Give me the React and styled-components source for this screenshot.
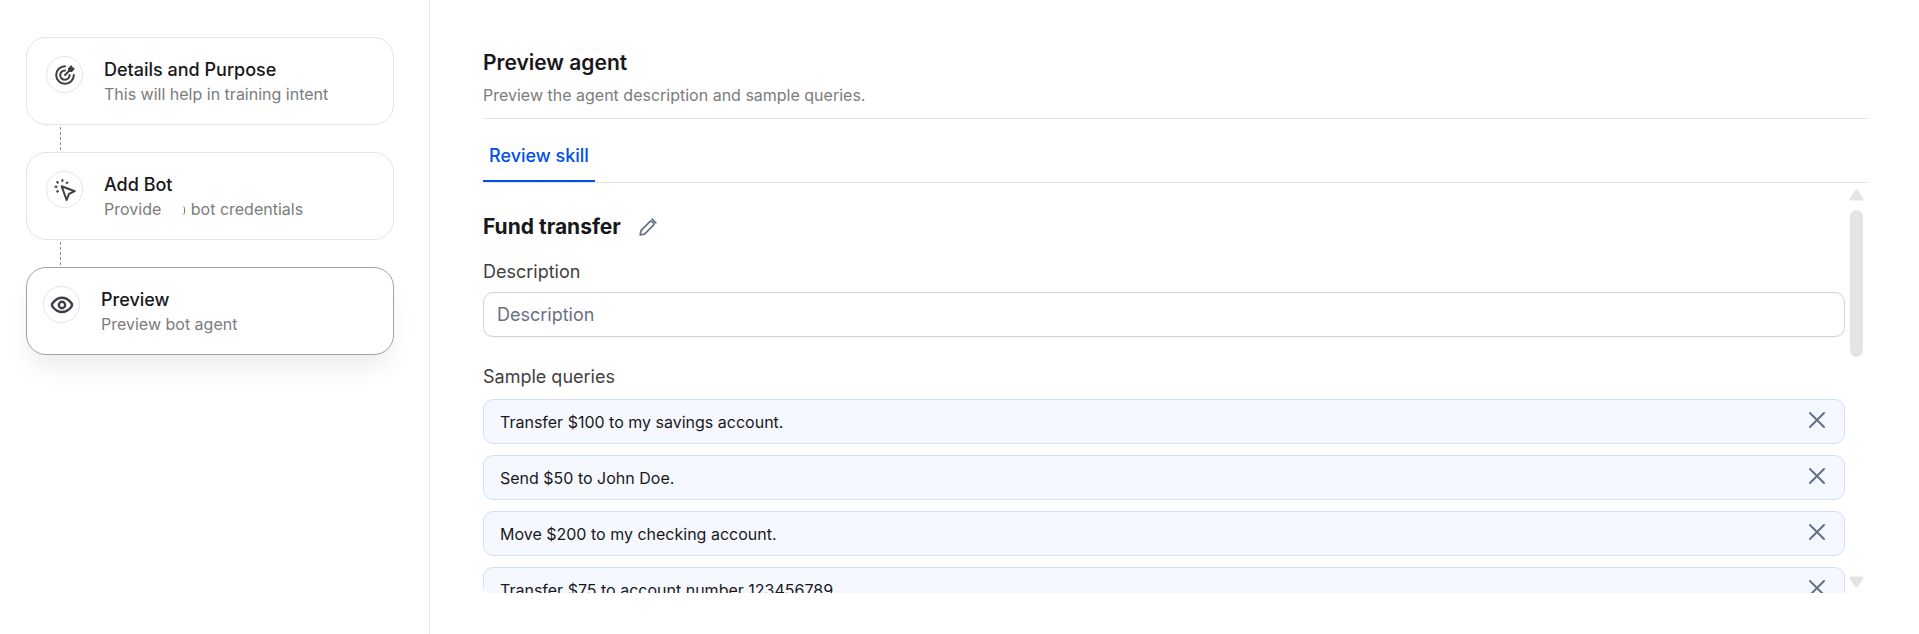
import React, { useState } from 'react';
import styled, { createGlobalStyle } from 'styled-components';

const GlobalStyle = createGlobalStyle`
    * {
        box-sizing: border-box;
    }

    body {
        margin: 0;
        background: #ffffff;
        font-family: Inter, "Liberation Sans", sans-serif;
        color: #18181b;
    }

    h1, h2, p, ul, ol {
        margin: 0;
        padding: 0;
    }
`

const Page = styled.div`
    display: flex;
    height: 100vh;
`

const Sidebar = styled.nav`
    flex: 0 0 430px;
    padding: 37px 35px 0 26px;
    border-right: 1px solid #e4e4e7;
`

const Steps = styled.ol`
    list-style: none;
`

const Connector = styled.li`
    height: 27px;
    padding: 2px 0 2px 34px;
`

const StepCard = styled.button`
    display: flex;
    align-items: flex-start;
    gap: 21px;
    width: 100%;
    height: 88px;
    padding: 18px ${props => props.$active ? '16px' : '19px'};
    background: #ffffff;
    border: 1px solid ${props => props.$active ? '#a1a1aa' : '#e4e4e7'};
    border-radius: 20px;
    box-shadow: ${props => props.$active ? '0 16px 24px -4px rgba(0, 0, 0, 0.08)' : 'none'};
    font-family: inherit;
    text-align: left;
    cursor: pointer;
`

const StepIcon = styled.span`
    display: flex;
    flex: none;
    align-items: center;
    justify-content: center;
    width: 37px;
    height: 37px;
    border: 1px solid #e4e4e7;
    border-radius: 50%;
    color: #3f3f46;
`

const StepText = styled.span`
    display: flex;
    flex-direction: column;
    padding-top: 1px;
`

const StepTitle = styled.span`
    font-size: 18px;
    line-height: 26px;
    font-weight: 500;
    color: #18181b;
`

const StepInfo = styled.span`
    font-size: 16px;
    line-height: 22px;
    color: #7c7c7c;
`

const CopyMark = styled.span`
    display: inline-block;
    width: 3px;
    height: 9px;
    margin: 0 1px 0 21px;
    border-right: 1px solid #7c7c7c;
    border-radius: 0 4px 4px 0;
`

const Main = styled.main`
    display: flex;
    flex: 1;
    flex-direction: column;
    min-width: 0;
    padding: 49px 51px 41px 53px;
`

const Header = styled.header`
    padding-bottom: 12px;
    border-bottom: 1px solid #e4e4e7;
`

const Title = styled.h1`
    font-size: 21px;
    line-height: 28px;
    font-weight: 600;
`

const Subtitle = styled.p`
    margin-top: 7px;
    font-size: 16px;
    line-height: 22px;
    color: #7c7c7c;
`

const Tabs = styled.div`
    display: flex;
    margin-top: 22px;
    border-bottom: 1px solid #e4e4e7;
`

const Tab = styled.button`
    height: 41px;
    padding: 0 6px 10px;
    background: none;
    border: 0;
    border-bottom: 2px solid #004eeb;
    font-family: inherit;
    font-size: 18px;
    line-height: 28px;
    font-weight: 500;
    color: #004eeb;
    cursor: pointer;
`

const ScrollArea = styled.div`
    display: flex;
    flex: 1;
    gap: 4px;
    min-height: 0;
`

const Content = styled.div`
    flex: 1;
    min-width: 0;
    padding-top: 30px;
    overflow-y: auto;
    scrollbar-width: none;
    border-radius: 0 0 0 6px;
`

const ScrollTrack = styled.div`
    display: flex;
    flex-direction: column;
    align-items: center;
    width: 15px;
    margin-right: 4px;
    padding: 6px 0 5px;
    color: #e4e4e4;
`

const ScrollThumb = styled.div`
    width: 13px;
    height: 147px;
    margin: 9px 0 auto;
    background: #e4e4e4;
    border-radius: 7px;
`

const SkillRow = styled.div`
    display: flex;
    align-items: center;
    gap: 17px;
`

const SkillName = styled.h2`
    font-size: 21px;
    line-height: 28px;
    font-weight: 700;
`

const IconButton = styled.button`
    display: flex;
    padding: 0;
    background: none;
    border: 0;
    color: #667085;
    cursor: pointer;
`

const RemoveButton = styled(IconButton)`
    padding-bottom: 3px;
`

const Label = styled.label`
    display: block;
    margin-top: 17px;
    font-size: 18px;
    line-height: 28px;
    color: #404040;
`

const DescriptionInput = styled.input`
    display: block;
    width: 100%;
    height: 45px;
    margin-top: 6px;
    padding: 0 13px;
    background: #ffffff;
    border: 1px solid #d0d5dd;
    border-radius: 10px;
    box-shadow: 0 1px 2px rgba(16, 24, 40, 0.05);
    font-family: inherit;
    font-size: 18px;
    color: #18181b;

    &::placeholder {
        color: #667085;
        opacity: 1;
    }
`

const ListTitle = styled.p`
    margin-top: 26px;
    font-size: 18px;
    line-height: 28px;
    color: #404040;
`

const QueryList = styled.ul`
    display: flex;
    flex-direction: column;
    gap: 11px;
    margin-top: 8px;
    list-style: none;
`

const QueryItem = styled.li`
    display: flex;
    flex: none;
    align-items: center;
    justify-content: space-between;
    height: 45px;
    padding: 0 18px 0 16px;
    background: #f5f8ff;
    border: 1px solid #d1e0ff;
    border-radius: 10px;
    font-size: 16px;
    line-height: 22px;
`

function TargetIcon() {
    return (
        <svg width="22" height="22" viewBox="0 0 22 22" fill="none" stroke="currentColor" strokeWidth="2" strokeLinecap="round" strokeLinejoin="round">
            <path d="M11 2.2A8.8 8.8 0 1 0 19.8 11" />
            <path d="M11 6.4A4.7 4.7 0 1 0 15.6 11" />
            <path d="M11 11l5-5" />
            <path d="M15 7V4.6L17.3 2.4l.5 1.8 1.8.5L17.4 7z" fill="currentColor" />
        </svg>
    )
}

function CursorIcon() {
    return (
        <svg width="24" height="24" viewBox="0 0 24 24" fill="none" stroke="currentColor" strokeWidth="2" strokeLinejoin="round">
            <path d="M8.6 8.2l13.2 5-5.8 2.6-2.4 6.2z" />
            <path d="M9.4 1.2v2.6M1.6 8.8h2.8M3.6 3.4l1.8 1.8M14.8 3.8L13.2 5.6M5.4 12.6l-1.8 1.6" />
        </svg>
    )
}

function EyeIcon() {
    return (
        <svg width="24" height="24" viewBox="0 0 24 24" fill="none" stroke="currentColor" strokeWidth="2.4">
            <path d="M3 14.2c-1.6-1.8-1.6-2.8 0-4.6C5.2 7 8.2 4.8 12 4.8s6.8 2.2 9 4.8c1.6 1.8 1.6 2.8 0 4.6C18.8 16.8 15.8 19 12 19s-6.8-2.2-9-4.8z" />
            <circle cx="12" cy="12" r="3.2" />
        </svg>
    )
}

function PencilIcon() {
    return (
        <svg width="20" height="20" viewBox="0 0 20 20" fill="none" stroke="currentColor" strokeWidth="1.7" strokeLinecap="round" strokeLinejoin="round">
            <path d="M2.2 18l.8-4.4L11.8 4.6a1.5 1.5 0 0 1 2.2 0l1.4 1.4a1.5 1.5 0 0 1 0 2.2L6.6 17.2z" />
            <path d="M14.2 2.2l3.6 3.6" />
        </svg>
    )
}

function CloseIcon() {
    return (
        <svg width="18" height="18" viewBox="0 0 18 18" fill="none" stroke="currentColor" strokeWidth="2" strokeLinecap="round">
            <path d="M2 2l14 14M16 2L2 16" />
        </svg>
    )
}

function Arrow({ points }) {
    return (
        <svg width="15" height="12" viewBox="0 0 15 12" fill="currentColor" stroke="currentColor" strokeWidth="3" strokeLinejoin="round">
            <polygon points={points} />
        </svg>
    )
}

const steps = [
    { title: "Details and Purpose", info: "This will help in training intent", icon: <TargetIcon /> },
    { title: "Add Bot", info: <>Provide<CopyMark /> bot credentials</>, icon: <CursorIcon /> },
    { title: "Preview", info: "Preview bot agent", icon: <EyeIcon /> },
];

const sampleQueries = [
    "Transfer $100 to my savings account.",
    "Send $50 to John Doe.",
    "Move $200 to my checking account.",
    "Transfer $75 to account number 123456789.",
];

function App() {
    const [active, setActive] = useState(2);
    const [description, setDescription] = useState('');
    const [queries, setQueries] = useState(sampleQueries);

    function removeQuery(query) {
        setQueries(queries.filter(item => item !== query));
    }

    return (
        <Page>
            <GlobalStyle />
            <Sidebar>
                <Steps>
                    {steps.map((step, index) => (
                        <React.Fragment key={step.title}>
                            {index > 0 && (
                                <Connector aria-hidden="true">
                                    <svg width="1" height="23" display="block">
                                        <path d="M.5 0v23" stroke="#8e8e98" strokeDasharray="3 2" />
                                    </svg>
                                </Connector>
                            )}
                            <li>
                                <StepCard type="button" $active={index === active} onClick={() => setActive(index)}>
                                    <StepIcon>{step.icon}</StepIcon>
                                    <StepText>
                                        <StepTitle>{step.title}</StepTitle>
                                        <StepInfo>{step.info}</StepInfo>
                                    </StepText>
                                </StepCard>
                            </li>
                        </React.Fragment>
                    ))}
                </Steps>
            </Sidebar>
            <Main>
                <Header>
                    <Title>Preview agent</Title>
                    <Subtitle>Preview the agent description and sample queries.</Subtitle>
                </Header>
                <Tabs role="tablist">
                    <Tab type="button" role="tab" aria-selected="true">Review skill</Tab>
                </Tabs>
                <ScrollArea>
                    <Content>
                        <SkillRow>
                            <SkillName>Fund transfer</SkillName>
                            <IconButton type="button" aria-label="Edit name"><PencilIcon /></IconButton>
                        </SkillRow>
                        <Label htmlFor="description">Description</Label>
                        <DescriptionInput
                            id="description"
                            type="text"
                            placeholder="Description"
                            value={description}
                            onChange={(e) => setDescription(e.target.value)}
                        />
                        <ListTitle>Sample queries</ListTitle>
                        <QueryList>
                            {queries.map(query => (
                                <QueryItem key={query}>
                                    {query}
                                    <RemoveButton type="button" aria-label="Remove query" onClick={() => removeQuery(query)}>
                                        <CloseIcon />
                                    </RemoveButton>
                                </QueryItem>
                            ))}
                        </QueryList>
                    </Content>
                    <ScrollTrack aria-hidden="true">
                        <Arrow points="7.5,2 13,10 2,10" />
                        <ScrollThumb />
                        <Arrow points="2,2 13,2 7.5,10" />
                    </ScrollTrack>
                </ScrollArea>
            </Main>
        </Page>
    )
}

export default App
